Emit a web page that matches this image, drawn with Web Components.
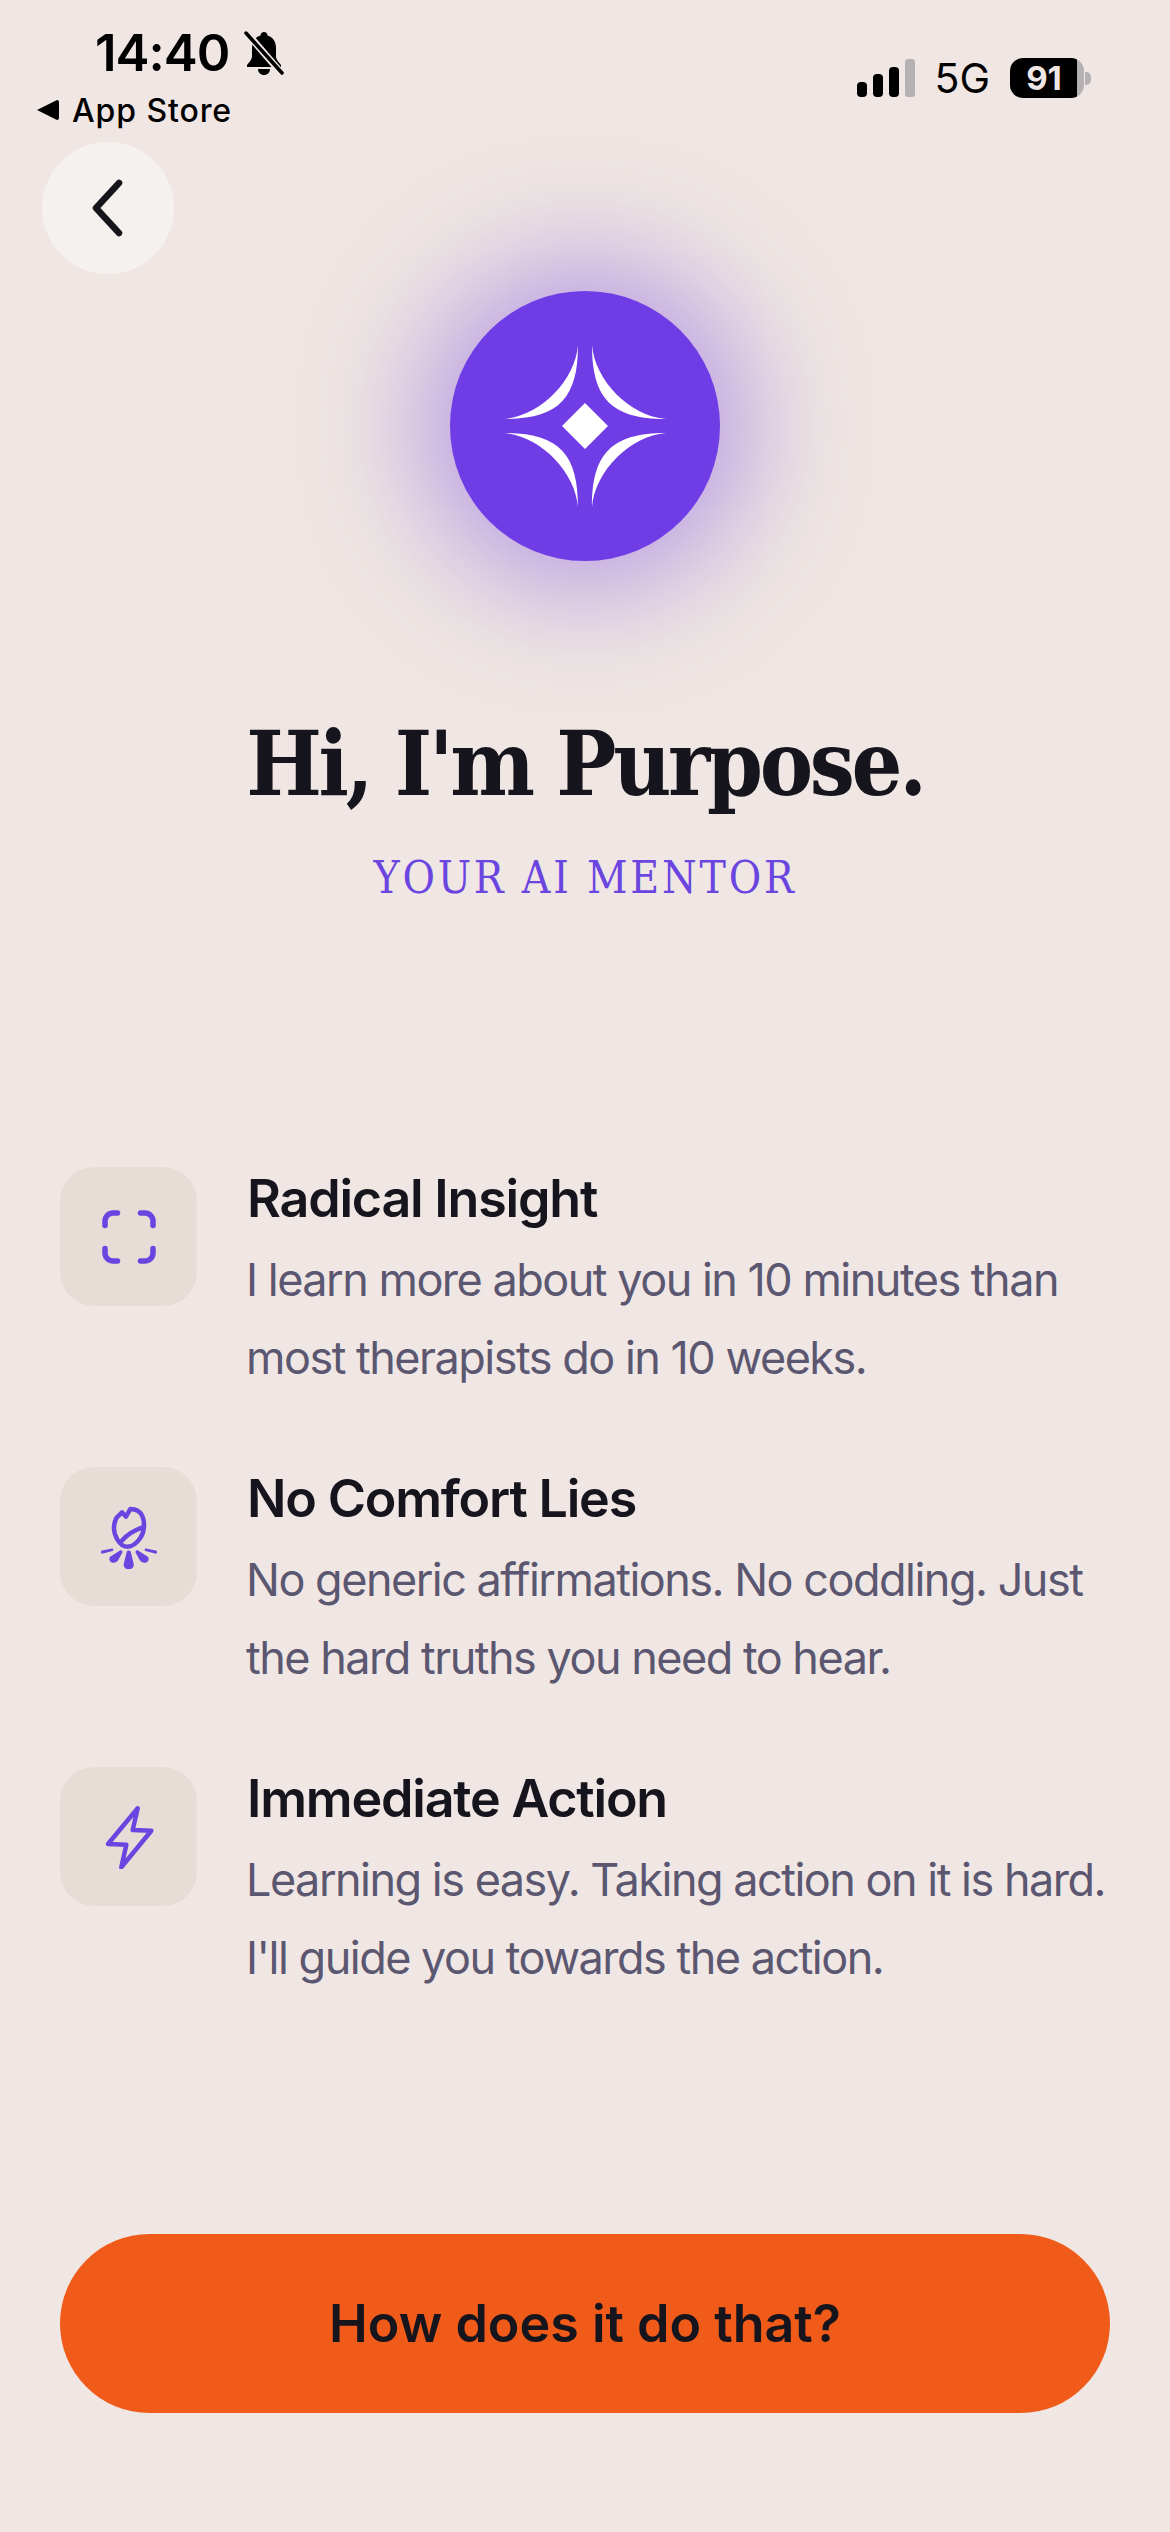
<!DOCTYPE html>
<html lang="en">
<head>
<meta charset="utf-8">
<title>Purpose</title>
<style>
    html, body {
        margin: 0;
        background-color: #F0E6E4;
    }
</style>
</head>
<body>
<intro-screen>
    <status-bar slot="status"></status-bar>
    <hero-block slot="hero"></hero-block>
    <feature-row>
        <svg slot="icon" width="64" height="64" viewBox="0 0 64 64" fill="none" stroke="#6B45E0" stroke-width="5.5" stroke-linecap="round">
            <path d="M8 20.5V16a8 8 0 0 1 8-8h4.5"/>
            <path d="M43.5 8H48a8 8 0 0 1 8 8v4.5"/>
            <path d="M8 43.5V48a8 8 0 0 0 8 8h4.5"/>
            <path d="M43.5 56H48a8 8 0 0 0 8-8v-4.5"/>
        </svg>
        <span slot="title">Radical Insight</span>
        I learn more about you in 10 minutes than most therapists do in 10 weeks.
    </feature-row>
    <feature-row>
        <svg slot="icon" width="64" height="64" viewBox="0 0 64 64" fill="none" stroke="#6B45E0" stroke-width="4.5" stroke-linecap="round" stroke-linejoin="round">
            <path d="M33.3 4C39 4 43.5 6.500 45.500 11.500C48 17.500 47.500 27 43.300 33C39.500 38.500 35 41.700 30.500 41.700C26 41.700 22.500 38.500 20 34C17 29 15.800 21 19.300 13L25 7.300L29 11.700Z"/>
            <path d="M25 35.700C30 29 38 25 45.500 22.300"/>
            <path fill="#6B45E0" stroke="none" d="M29.800 46.500C30.500 45 33 45 33.600 46.500L36.600 58.500C37.400 62 34.800 64.500 31.700 64.500C28.600 64.500 26 62 26.800 58.500Z"/>
            <path fill="#6B45E0" stroke="none" d="M23 45.500C24.200 44.500 26 46 25.400 47.400L21.600 54.500C19.800 57.500 16.500 58.600 14.200 57.200C12 55.500 11.600 53 13.500 51.400Z"/>
            <path fill="#6B45E0" stroke="none" d="M41 45.500C39.800 44.500 38 46 38.600 47.400L42.400 54.500C44.200 57.500 47.500 58.600 49.800 57.200C52 55.500 52.400 53 50.500 51.400Z"/>
            <path fill="#6B45E0" stroke="none" d="M15 43.600C16.400 43.400 17 45.400 15.600 46L6 48.600C4 49 3 46.400 5 45.400Z"/>
            <path fill="#6B45E0" stroke="none" d="M49 43.600C47.600 43.400 47 45.400 48.400 46L58 48.600C60 49 61 46.400 59 45.400Z"/>
        </svg>
        <span slot="title">No Comfort Lies</span>
        No generic affirmations. No coddling. Just the hard truths you need to hear.
    </feature-row>
    <feature-row>
        <svg slot="icon" width="64" height="64" viewBox="0 0 64 64" fill="none" stroke="#6B45E0" stroke-width="4.5" stroke-linecap="round" stroke-linejoin="round">
            <path d="M40.700 3.300L35.700 25L54.300 25.700L24.300 62.300L29.300 39.700L11 39Z"/>
        </svg>
        <span slot="title">Immediate Action</span>
        Learning is easy. Taking action on it is hard. I'll guide you towards the action.
    </feature-row>
    <cta-button slot="cta">How does it do that?</cta-button>
</intro-screen>

<script>
const statusBarTemplate = document.createElement("template");
statusBarTemplate.innerHTML = `
    <style>
        :host {
            display: flex;
            justify-content: space-between;
            align-items: flex-start;
            height: 142px;
            box-sizing: border-box;
            padding: 28px 79px 0 37px;
            font-family: Inter, "Liberation Sans", sans-serif;
            color: #000;
        }
        .left {
            display: flex;
            flex-direction: column;
            gap: 14px;
        }
        .time-row {
            display: flex;
            align-items: center;
            gap: 14px;
            padding-left: 58px;
            height: 50px;
        }
        .time {
            font-size: 51px;
            line-height: 50px;
            font-weight: 600;
            letter-spacing: -1px;
        }
        .store-row {
            display: flex;
            align-items: center;
            gap: 13px;
            height: 36px;
            font-size: 32px;
            font-weight: 500;
            letter-spacing: 0.9px;
        }
        .right {
            display: flex;
            align-items: center;
            padding-top: 30px;
        }
        .net {
            font-size: 41px;
            line-height: 40px;
            font-weight: 400;
            margin: 0 20px 0 19px;
        }
        .battery {
            width: 74px;
            height: 40px;
            border-radius: 13px;
            background: linear-gradient(90deg, #000 91%, #B5B0B2 91%);
            color: #F0E6E4;
            font-size: 33px;
            font-weight: 700;
            line-height: 40px;
            text-align: center;
            padding-right: 6px;
            box-sizing: border-box;
        }
        .nub {
            width: 6px;
            height: 13px;
            margin-left: 1px;
            border-radius: 0 5px 5px 0;
            background-color: #B5B0B2;
        }
    </style>
    <div class="left">
        <div class="time-row">
            <span class="time">14:40</span>
            <svg width="42" height="44" viewBox="0 0 42 44">
                <path fill="#000" d="M21 1C23 1 24.500 2.500 24.500 4.500C30 6 33 11 33 17V25C33 29 36 31 38 34V36H4V34C6 31 9 29 9 25V17C9 11 12 6 17.500 4.500C17.500 2.500 19 1 21 1Z"/>
                <path fill="#000" d="M15 38H27C27 41.500 24.500 44 21 44C17.500 44 15 41.500 15 38Z"/>
                <path stroke="#F0E6E4" stroke-width="7" d="M2 0L40 44"/>
                <path stroke="#000" stroke-width="3.500" stroke-linecap="round" d="M3 2L39 42"/>
            </svg>
        </div>
        <div class="store-row">
            <svg width="22" height="20" viewBox="0 0 22 20"><path fill="#000" d="M0 10L20 0Q22 0 22 2V18Q22 20 20 20Z"/></svg>
            <span>App Store</span>
        </div>
    </div>
    <div class="right">
        <svg width="58" height="38" viewBox="0 0 58 38">
            <rect x="0" y="23" width="10" height="15" rx="4" fill="#000"/>
            <rect x="16" y="15" width="10" height="23" rx="4" fill="#000"/>
            <rect x="32" y="8" width="10" height="30" rx="4" fill="#000"/>
            <rect x="48" y="0" width="10" height="38" rx="3" fill="#B5B0B2"/>
        </svg>
        <span class="net">5G</span>
        <div class="battery">91</div>
        <div class="nub"></div>
    </div>
`;

class StatusBar extends HTMLElement {
    constructor() {
        super();
        this.attachShadow({mode: "open"});
        this.shadowRoot.append(statusBarTemplate.content.cloneNode(true));
    }
}

const heroTemplate = document.createElement("template");
heroTemplate.innerHTML = `
    <style>
        :host {
            display: grid;
            grid-template-columns: 1fr auto 1fr;
            justify-items: center;
            text-align: center;
        }
        .back {
            justify-self: start;
            align-self: start;
            width: 132px;
            height: 132px;
            margin-left: 42px;
            border-radius: 50%;
            background-color: #F5F1EE;
            display: grid;
            place-items: center;
        }
        .orb {
            position: relative;
            width: 270px;
            height: 270px;
            margin-top: 149px;
            border-radius: 50%;
            background-color: #703CE6;
            box-shadow: 0 0 130px 24px rgba(112, 60, 230, 0.5);
            display: grid;
            place-items: center;
        }
        .orb::before {
            content: "";
            position: absolute;
            inset: -190px;
            z-index: -1;
            border-radius: 50%;
            background: radial-gradient(closest-side, rgba(240, 233, 226, 0.8) 75%, rgba(240, 230, 228, 0) 100%);
        }
        h1 {
            grid-column: 1 / -1;
            margin: 148px 0 0;
            font-family: "DejaVu Serif", "Liberation Serif", serif;
            font-stretch: condensed;
            font-size: 89px;
            line-height: 110px;
            font-weight: 700;
            letter-spacing: -3.300px;
            color: #16141C;
        }
        p {
            grid-column: 1 / -1;
            margin: 32px 0 0;
            font-family: "DejaVu Serif", "Liberation Serif", serif;
            font-stretch: condensed;
            font-size: 44px;
            line-height: 54px;
            letter-spacing: 2.800px;
            color: #6B45E0;
        }
    </style>
    <div class="back">
        <svg width="40" height="60" viewBox="0 0 40 60" fill="none" stroke="#17151C" stroke-width="6.500" stroke-linecap="round" stroke-linejoin="round">
            <path d="M31 5L8 30L31 55"/>
        </svg>
    </div>
    <div class="orb">
        <svg width="170" height="170" viewBox="-85 -85 170 170" fill="#fff">
            <path d="M-7-81C-7-28-26-7-81-7C-45-10-10-45-7-81Z"/>
            <path d="M7-81C7-28 26-7 81-7C45-10 10-45 7-81Z"/>
            <path d="M-7 81C-7 28-26 7-81 7C-45 10-10 45-7 81Z"/>
            <path d="M7 81C7 28 26 7 81 7C45 10 10 45 7 81Z"/>
            <path d="M0-23L23 0L0 23L-23 0Z"/>
        </svg>
    </div>
    <div></div>
    <h1>Hi, I'm Purpose.</h1>
    <p>YOUR AI MENTOR</p>
`;

class HeroBlock extends HTMLElement {
    constructor() {
        super();
        this.attachShadow({mode: "open"});
        this.shadowRoot.append(heroTemplate.content.cloneNode(true));
    }
}

const featureRowTemplate = document.createElement("template");
featureRowTemplate.innerHTML = `
    <style>
        :host {
            display: grid;
            grid-template-columns: 137px 1fr;
            column-gap: 50px;
            font-family: Inter, "Liberation Sans", sans-serif;
        }
        .tile {
            width: 137px;
            height: 139px;
            border-radius: 34px;
            background-color: #E7DDD7;
            display: grid;
            place-items: center;
        }
        .title {
            padding-top: 3px;
            font-size: 52px;
            line-height: 58px;
            font-weight: 600;
            letter-spacing: -1.2px;
            color: #16141C;
        }
        .desc {
            margin: 13px 0 0 -1px;
            font-size: 45px;
            line-height: 78px;
            letter-spacing: -1.5px;
            color: #5B5770;
        }
    </style>
    <div class="tile"><slot name="icon"></slot></div>
    <div>
        <div class="title"><slot name="title"></slot></div>
        <div class="desc"><slot></slot></div>
    </div>
`;

class FeatureRow extends HTMLElement {
    constructor() {
        super();
        this.attachShadow({mode: "open"});
        this.shadowRoot.append(featureRowTemplate.content.cloneNode(true));
    }
}

const ctaTemplate = document.createElement("template");
ctaTemplate.innerHTML = `
    <style>
        :host {
            display: flex;
            align-items: center;
            justify-content: center;
            height: 179px;
            border-radius: 90px;
            background-color: #F05B1A;
            font-family: Inter, "Liberation Sans", sans-serif;
            font-size: 52px;
            font-weight: 600;
            color: #16141C;
        }
    </style>
    <slot></slot>
`;

class CtaButton extends HTMLElement {
    constructor() {
        super();
        this.attachShadow({mode: "open"});
        this.shadowRoot.append(ctaTemplate.content.cloneNode(true));
    }
}

const screenTemplate = document.createElement("template");
screenTemplate.innerHTML = `
    <style>
        :host {
            display: flex;
            flex-direction: column;
            height: 2532px;
            overflow: hidden;
            position: relative;
            isolation: isolate;
        }
        .features {
            display: flex;
            flex-direction: column;
            gap: 70px;
            margin-top: 262px;
            padding: 0 50px 0 60px;
        }
        .cta {
            margin-top: auto;
            padding: 0 60px 119px;
        }
    </style>
    <slot name="status"></slot>
    <slot name="hero"></slot>
    <div class="features"><slot></slot></div>
    <div class="cta"><slot name="cta"></slot></div>
`;

class IntroScreen extends HTMLElement {
    constructor() {
        super();
        this.attachShadow({mode: "open"});
        this.shadowRoot.append(screenTemplate.content.cloneNode(true));
    }
}

customElements.define("status-bar", StatusBar);
customElements.define("hero-block", HeroBlock);
customElements.define("feature-row", FeatureRow);
customElements.define("cta-button", CtaButton);
customElements.define("intro-screen", IntroScreen);
</script>
</body>
</html>
